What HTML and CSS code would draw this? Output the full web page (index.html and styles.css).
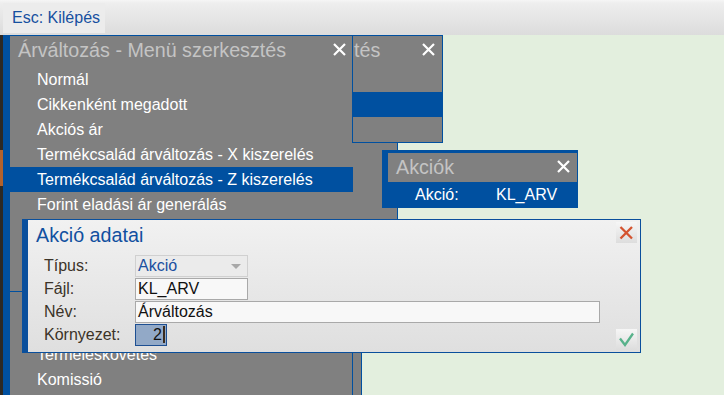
FILE: index.html
```html
<!DOCTYPE html>
<html lang="hu">
<head>
    <meta charset="UTF-8">
    <meta name="viewport" content="width=device-width, initial-scale=1.0">
    <title>Árváltozás</title>
    <link rel="stylesheet" href="styles.css">
</head>
<body>
    <div class="topbar">
        <button class="esc">Esc: Kilépés</button>
    </div>
    <div class="desk">
        <!-- windows behind -->
        <div class="win win-a"></div>
        <div class="win win-e">
            <ul class="items">
                <li>Termeléskövetés</li>
                <li>Komissió</li>
            </ul>
        </div>
        <div class="win win-d"></div>

        <!-- Árváltozás menu -->
        <div class="win win-c">
            <div class="win-title">
                <span>Árváltozás - Menü szerkesztés</span>
                <svg class="close" viewBox="0 0 13 13"><path d="M1 1L12 12M12 1L1 12"/></svg>
            </div>
            <ul class="items">
                <li>Normál</li>
                <li>Cikkenként megadott</li>
                <li>Akciós ár</li>
                <li>Termékcsalád árváltozás - X kiszerelés</li>
                <li class="active">Termékcsalád árváltozás - Z kiszerelés</li>
                <li>Forint eladási ár generálás</li>
            </ul>
        </div>

        <!-- second menu window, mostly covered -->
        <div class="win win-b">
            <div class="win-title">
                <span>tés</span>
                <svg class="close" viewBox="0 0 13 13"><path d="M1 1L12 12M12 1L1 12"/></svg>
            </div>
            <ul class="items">
                <li></li>
                <li class="active"></li>
                <li></li>
            </ul>
        </div>

        <div class="akciok">
            <div class="win-title">
                <span>Akciók</span>
                <svg class="close" viewBox="0 0 13 13"><path d="M1 1L12 12M12 1L1 12"/></svg>
            </div>
            <div class="akciok-row">
                <span class="akciok-label">Akció:</span>
                <span>KL_ARV</span>
            </div>
        </div>

        <div class="dialog">
            <div class="dialog-title">Akció adatai</div>
            <button class="dlg-btn btn-close">
                <svg viewBox="0 0 21 21"><path d="M4.5 5L16 16.5M16 5L4.5 16.5"/></svg>
            </button>
            <div class="fields">
                <label>Típus:</label>
                <div class="field select">Akció<span class="arrow"></span></div>
                <label>Fájl:</label>
                <div class="field short">KL_ARV</div>
                <label>Név:</label>
                <div class="field long">Árváltozás</div>
                <label>Környezet:</label>
                <div class="field num"><span class="caret">2</span></div>
            </div>
            <button class="dlg-btn btn-ok">
                <svg viewBox="0 0 21 21"><path d="M4 9.5L9 16L17 4.5"/></svg>
            </button>
        </div>
    </div>
</body>
</html>
```

FILE: styles.css
```css
body {
    margin: 0;
    font-family: "Liberation Sans", Arial, sans-serif;
    font-size: 16px;
    overflow: hidden;
}
ul {
    list-style: none;
    margin: 0;
    padding: 0;
}
.topbar {
    height: 35px;
    background: linear-gradient(#f6f6f6 0, #eeeeee 3px, #dcdcdc 100%);
    padding: 3px 0 0 3px;
    box-sizing: border-box;
}
.esc {
    width: 102px;
    height: 30px;
    border: none;
    background: #ececec;
    color: #1650a0;
    font-family: inherit;
    font-size: 16px;
    text-align: left;
    padding: 0 0 0 9px;
}
.desk {
    position: relative;
    height: 360px;
    background:
        linear-gradient(#b4622c, #b4622c) 0 115px / 3px 36px no-repeat,
        linear-gradient(#2d2924, #2d2924) 0 0 / 3px 100% no-repeat,
        #e3efde;
}
.win {
    position: absolute;
    background: #808080;
    box-sizing: border-box;
    color: #fff;
}
.win-a {
    left: 3px;
    top: 0;
    width: 359px;
    height: 100%;
    border-left: 7px solid #0050a0;
    border-right: 1px solid #0050a0;
}
.win-e {
    left: 10px;
    top: 257px;
    width: 343px;
    bottom: 0;
    border-right: 1px solid #0050a0;
    padding-top: 50px;
}
.win-d {
    left: 10px;
    top: 107px;
    width: 388px;
    height: 150px;
    border-right: 1px solid #0050a0;
    border-bottom: 1px solid #0050a0;
}
.win-c {
    left: 10px;
    top: 0;
    width: 343px;
    height: 182px;
    border-top: 1px solid #0050a0;
}
.win-b {
    left: 352px;
    top: 0;
    width: 91px;
    height: 108px;
    border: 1px solid #0050a0;
}
.win-b .win-title {
    padding-left: 1px;
}
.win-title {
    position: relative;
    height: 31px;
    line-height: 29px;
    padding-left: 8px;
    font-size: 19.7px;
    color: #c4c4c4;
    white-space: nowrap;
}
.close {
    position: absolute;
    right: 7px;
    top: 7px;
    width: 13px;
    height: 13px;
    fill: none;
    stroke: #fff;
    stroke-width: 2.2;
}
.items li {
    height: 25px;
    line-height: 25px;
    padding-left: 27px;
    white-space: nowrap;
}
.items .active {
    background: #0050a0;
}
.akciok {
    position: absolute;
    left: 382px;
    top: 115px;
    width: 196px;
    height: 58px;
    box-sizing: border-box;
    background: #0050a0;
    padding: 3px 1px 1px 6px;
    color: #fff;
}
.akciok .win-title {
    height: 29px;
    background: #808080;
    line-height: 29px;
}
.akciok-row {
    display: flex;
    height: 25px;
    line-height: 25px;
    padding-left: 27px;
}
.akciok-label {
    width: 81px;
}
.dialog {
    position: absolute;
    left: 22px;
    top: 184px;
    width: 619px;
    height: 134px;
    box-sizing: border-box;
    border: 1px solid #0a4f9c;
    border-left-width: 6px;
    background: linear-gradient(#f1f1f1, #dfdfdf);
}
.dialog-title {
    height: 30px;
    line-height: 30px;
    padding-left: 8px;
    font-size: 19.7px;
    color: #1150a0;
}
.dlg-btn {
    position: absolute;
    right: 3px;
    width: 21px;
    height: 21px;
    padding: 0;
    border: none;
    background: linear-gradient(#f6f6f6, #dddddd);
}
.dlg-btn svg {
    display: block;
    width: 21px;
    height: 21px;
    fill: none;
}
.btn-close {
    top: 2px;
}
.btn-close svg {
    stroke: #d4532f;
    stroke-width: 2.3;
}
.btn-ok {
    bottom: 2px;
}
.btn-ok svg {
    stroke: #58b28b;
    stroke-width: 2.3;
}
.fields {
    display: grid;
    grid-template-columns: 91px auto;
    grid-auto-rows: 22px;
    row-gap: 1px;
    margin-top: 5px;
    padding-left: 16px;
    align-items: center;
}
.fields label {
    color: #3b3328;
}
.field {
    box-sizing: border-box;
    height: 22px;
    line-height: 20px;
    padding-left: 2px;
    border: 1px solid #a9a9a9;
    background: #f8f8f8;
    color: #111;
}
.select {
    position: relative;
    width: 113px;
    border-color: #d0d0d0;
    background: #ebebeb;
    color: #1a50a0;
}
.arrow {
    position: absolute;
    right: 6px;
    top: 8px;
    border-left: 5px solid transparent;
    border-right: 5px solid transparent;
    border-top: 5px solid #a8a8a8;
}
.short {
    width: 113px;
}
.long {
    width: 465px;
}
.num {
    width: 32px;
    border-color: #1d4f92;
    background: #92a9c7;
    text-align: right;
    padding-right: 1px;
}
.caret {
    border-right: 2px solid #3a2b1e;
    padding-right: 1px;
}
```
